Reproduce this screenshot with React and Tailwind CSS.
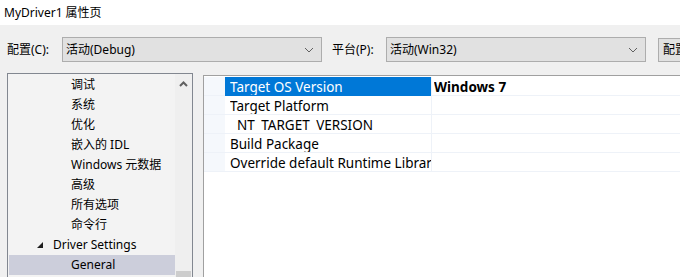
import React from "react";

const font = { fontFamily: '"Noto Sans", "Noto Sans CJK SC", sans-serif' };

function Chevron() {
  return (
    <svg width="10" height="6" viewBox="0 0 10 6" className="shrink-0">
      <path d="M1 1 L5 5 L9 1" fill="none" stroke="#606060" strokeWidth="1" />
    </svg>
  );
}

function Combo({ text }) {
  return (
    <div className="w-[260px] h-[25px] shrink-0 border border-[#adadad] bg-[#e1e1e1] flex items-center pl-[3px] pr-[7px] justify-between">
      <span>{text}</span>
      <Chevron />
    </div>
  );
}

const treeItems = ["调试", "系统", "优化", "嵌入的 IDL", "Windows 元数据", "高级", "所有选项", "命令行"];

const props = [
  { name: "Target OS Version", value: "Windows 7", selected: true },
  { name: "Target Platform" },
  { name: "NT TARGET VERSION", sub: true },
  { name: "Build Package" },
  { name: "Override default Runtime Library" },
];

export default function App() {
  return (
    <div
      className="w-[680px] h-[277px] overflow-hidden bg-[#f0f0f0] text-[12px] text-black leading-none"
      style={font}
    >
      <div className="h-[25px] bg-white pl-[4px] flex items-center">MyDriver1 属性页</div>

      <div className="flex items-center h-[25px] mt-[12px]">
        <span className="ml-[7px] w-[55px] shrink-0">配置(C):</span>
        <Combo text="活动(Debug)" />
        <span className="ml-[10px] w-[54px] shrink-0">平台(P):</span>
        <Combo text="活动(Win32)" />
        <div className="ml-[12px] h-[24px] w-[90px] shrink-0 border border-[#adadad] bg-[#e1e1e1] flex items-center pl-[4px] whitespace-nowrap overflow-hidden">
          配置管理器(O)...
        </div>
      </div>

      <div className="flex mt-[11px] h-[220px]">
        <div className="ml-[7px] w-[186px] h-[220px] shrink-0 border border-[#828790] bg-[#f3f3f3] flex">
          <div className="w-[167px] pt-[1px]">
            {treeItems.map((label) => (
              <div key={label} className="h-[20px] flex items-center pl-[63px]">
                {label}
              </div>
            ))}
            <div className="h-[20px] flex items-center pl-[29px]">
              <svg width="7" height="7" viewBox="0 0 7 7" className="mr-[9px]">
                <path d="M6 0 L6 6 L0 6 Z" fill="#1e1e1e" />
              </svg>
              Driver Settings
            </div>
            <div className="h-[20px] ml-[1px] bg-[#cccedb] flex items-center pl-[62px]">General</div>
          </div>
          <div className="w-[17px] bg-[#efefef] flex flex-col items-center">
            <svg width="9" height="6" viewBox="0 0 9 6" className="mt-[7px]">
              <path d="M1 5 L4.5 1.5 L8 5" fill="none" stroke="#606060" strokeWidth="2" />
            </svg>
            <div className="mt-auto w-[15px] h-[21px] bg-[#cdcdcd] mr-[1px]" />
          </div>
        </div>

        <div className="ml-[10px] mt-[2px] flex-1 border-l border-t border-[#a0a0a0] bg-white pt-[1px] text-[13.5px]">
          {props.map((p) => (
            <div key={p.name} className="flex h-[19px]">
              <div className="w-[21px] bg-[#f5f8fc] border-b border-[#eef2f8]" />
              <div
                className={`w-[206px] h-[19px] overflow-hidden whitespace-nowrap pt-[3.5px] leading-[13.5px] ${
                  p.selected ? "bg-[#0078d7] text-white h-[18px]" : "border-b border-[#eef2f8]"
                } ${p.sub ? "pl-[12px] [word-spacing:3px]" : "pl-[5px]"}`}
              >
                <div className="h-[14px] overflow-hidden">{p.name}</div>
              </div>
              <div className="flex-1 border-l border-b border-[#eef2f8] pl-[2px] pt-[3.5px] leading-[13.5px] font-bold overflow-hidden">
                <div className="h-[14px] overflow-hidden">{p.value}</div>
              </div>
            </div>
          ))}
        </div>
      </div>
    </div>
  );
}
